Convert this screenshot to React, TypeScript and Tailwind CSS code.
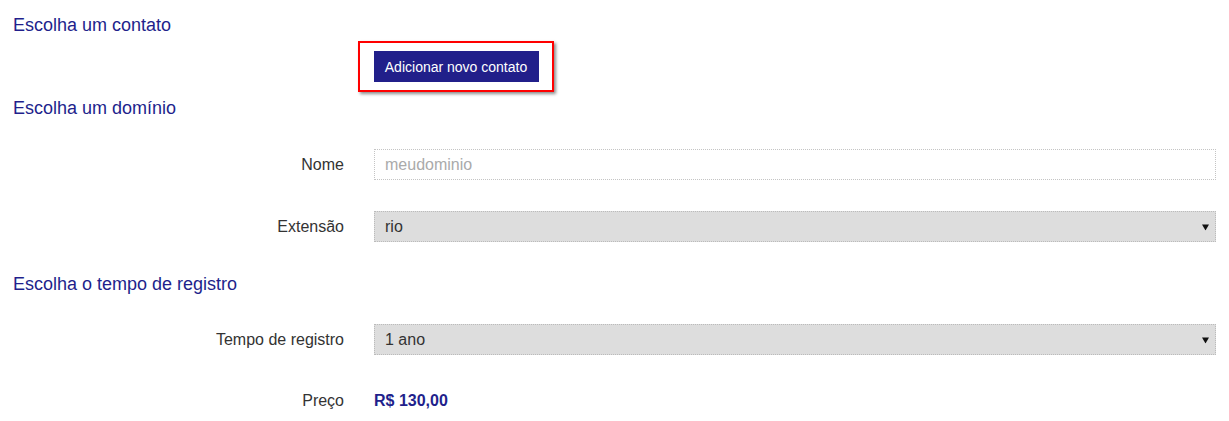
import React, { useState } from "react";

const font = { fontFamily: '"Liberation Sans", Arial, sans-serif' };

// Cabeçalho de seção
const SectionTitle: React.FC<{ children: React.ReactNode; className?: string }> = ({ children, className }) => (
  <h2 className={`pl-[13px] h-[20px] leading-[20px] text-[18px] text-[#221f8c] ${className ?? ""}`}>{children}</h2>
);

// Linha do formulário: rótulo à direita + campo
const FormRow: React.FC<{ label: string; children: React.ReactNode; className?: string }> = ({ label, children, className }) => (
  <div className={`flex items-center h-[31px] pr-[13px] ${className ?? ""}`}>
    <label className="w-[344px] shrink-0 text-right text-[16px] text-[#333]">{label}</label>
    <div className="flex-1 ml-[30px] h-full flex items-center">{children}</div>
  </div>
);

const Caret = () => (
  <svg className="absolute right-[7px] top-1/2 -translate-y-1/2 pointer-events-none" width="7" height="7" viewBox="0 0 7 7">
    <path d="M0 1 H7 L3.5 7 Z" fill="#111" />
  </svg>
);

const SelectBox: React.FC<{ value: string; options: string[]; onChange: (v: string) => void }> = ({ value, options, onChange }) => (
  <div className="relative w-full h-full">
    <select
      value={value}
      onChange={(e) => onChange(e.target.value)}
      className="appearance-none w-full h-full bg-[#dddddd] border border-dotted border-[#bbb] pl-[10px] text-[16px] text-[#333] outline-none"
      style={font}
    >
      {options.map((o) => (
        <option key={o} value={o}>{o}</option>
      ))}
    </select>
    <Caret />
  </div>
);

export default function App() {
  const [nome, setNome] = useState("");
  const [ext, setExt] = useState("rio");
  const [tempo, setTempo] = useState("1 ano");

  return (
    <div className="w-[1229px] h-[421px] bg-white overflow-hidden" style={font}>
      <div className="pt-[15px]">
        <SectionTitle>Escolha um contato</SectionTitle>

        {/* botão destacado */}
        <div className="mt-[6px] ml-[358px] w-[196px] h-[51px] border-2 border-[#ff0000] shadow-[2px_2px_3px_rgba(0,0,0,0.45)] flex items-center justify-center">
          <button className="w-[165px] h-[31px] bg-[#211f8a] text-white text-[14px] leading-none">
            Adicionar novo contato
          </button>
        </div>

        <SectionTitle className="mt-[6px]">Escolha um domínio</SectionTitle>

        <FormRow label="Nome" className="mt-[31px]">
          <input
            type="text"
            value={nome}
            onChange={(e) => setNome(e.target.value)}
            placeholder="meudominio"
            className="w-full h-full border border-dotted border-[#c4c4c4] pl-[10px] text-[16px] text-[#333] placeholder-[#aaa] outline-none"
            style={font}
          />
        </FormRow>

        <FormRow label="Extensão" className="mt-[31px]">
          <SelectBox value={ext} options={["rio", "com.br", "net.br"]} onChange={setExt} />
        </FormRow>

        <SectionTitle className="mt-[32px]">Escolha o tempo de registro</SectionTitle>

        <FormRow label="Tempo de registro" className="mt-[30px]">
          <SelectBox value={tempo} options={["1 ano", "2 anos", "3 anos"]} onChange={setTempo} />
        </FormRow>

        <FormRow label="Preço" className="mt-[30px]">
          <span className="text-[16px] font-bold text-[#221f8c]">R$ 130,00</span>
        </FormRow>
      </div>
    </div>
  );
}
